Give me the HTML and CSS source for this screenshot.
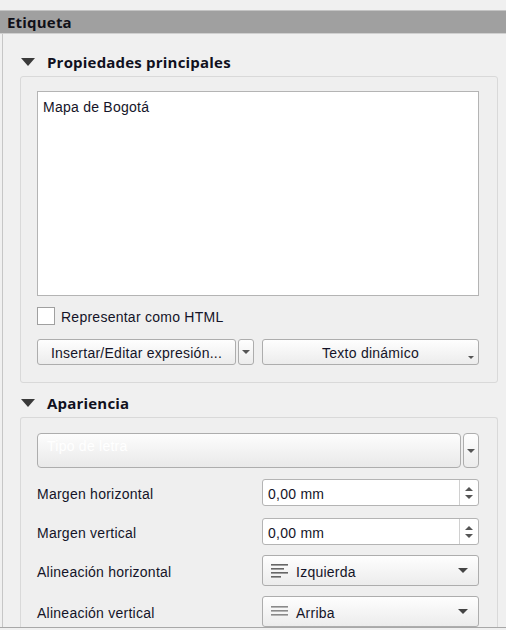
FILE: index.html
```html
<!DOCTYPE html>
<html>
<head>
<meta charset="utf-8">
<link rel="stylesheet" href="styles.css">
</head>
<body>
<div class="window">
  <div class="topgap"></div>
  <div class="header">Etiqueta</div>
  <div class="panel">
    <div class="section-title t1">
      <svg class="caret" width="14" height="8" viewBox="0 0 14 8"><path d="M0 0H14L7 8Z" fill="#3a3a3a"/></svg>
      <span>Propiedades principales</span>
    </div>
    <div class="group g1">
      <div class="textarea">Mapa de Bogotá</div>
      <div class="check"><span class="box"></span><span class="txt">Representar como HTML</span></div>
      <div class="btnrow">
        <div class="btn btn-expr"><span class="txt">Insertar/Editar expresión...</span></div>
        <div class="btn btn-menu"><svg width="8" height="4" viewBox="0 0 8 4"><path d="M0 0H8L4 4Z" fill="#555"/></svg></div>
        <div class="btn btn-dyn"><span class="txt">Texto dinámico</span><svg class="tiny" width="6" height="3" viewBox="0 0 6 3"><path d="M0 0H6L3 3Z" fill="#555"/></svg></div>
      </div>
    </div>
    <div class="section-title t2">
      <svg class="caret" width="14" height="8" viewBox="0 0 14 8"><path d="M0 0H14L7 8Z" fill="#3a3a3a"/></svg>
      <span>Apariencia</span>
    </div>
    <div class="group g2">
      <div class="fontrow">
        <div class="btn fontbtn">Tipo de letra</div>
        <div class="btn fontarrow"><svg width="8" height="4" viewBox="0 0 8 4"><path d="M0 0H8L4 4Z" fill="#555"/></svg></div>
      </div>
      <div class="formrow r-spin">
        <span class="label">Margen horizontal</span>
        <div class="spin">
          <span class="val">0,00 mm</span>
          <span class="arrows"><svg width="8" height="12" viewBox="0 0 8 12"><path d="M0 4H8L4 0Z M0 8H8L4 12Z" fill="#555"/></svg></span>
        </div>
      </div>
      <div class="formrow r-spin">
        <span class="label">Margen vertical</span>
        <div class="spin">
          <span class="val">0,00 mm</span>
          <span class="arrows"><svg width="8" height="12" viewBox="0 0 8 12"><path d="M0 4H8L4 0Z M0 8H8L4 12Z" fill="#555"/></svg></span>
        </div>
      </div>
      <div class="formrow r-combo">
        <span class="label">Alineación horizontal</span>
        <div class="btn combo">
          <svg class="lines" width="18" height="14" viewBox="0 0 18 14"><rect x="0" y="0" width="17" height="1.6" fill="#666"/><rect x="0" y="4" width="13" height="1.6" fill="#666"/><rect x="0" y="8" width="17" height="1.6" fill="#666"/><rect x="0" y="12" width="10" height="1.6" fill="#666"/></svg>
          <span class="cval">Izquierda</span>
          <svg class="carr" width="10" height="5" viewBox="0 0 10 5"><path d="M0 0H10L5 5Z" fill="#444"/></svg>
        </div>
      </div>
      <div class="formrow r-combo">
        <span class="label">Alineación vertical</span>
        <div class="btn combo">
          <svg class="lines" width="18" height="14" viewBox="0 0 18 14"><rect x="0" y="1" width="17" height="1.6" fill="#8a8a8a"/><rect x="0" y="5" width="17" height="1.6" fill="#8a8a8a"/><rect x="0" y="9" width="17" height="1.6" fill="#8a8a8a"/></svg>
          <span class="cval">Arriba</span>
          <svg class="carr" width="10" height="5" viewBox="0 0 10 5"><path d="M0 0H10L5 5Z" fill="#444"/></svg>
        </div>
      </div>
    </div>
  </div>
</div>
</body>
</html>
```
FILE: styles.css
```css
html, body {
  margin: 0;
  padding: 0;
  background: #f0f0f0;
}
body {
  font-family: "Liberation Sans", Arial, sans-serif;
  font-size: 14px;
  letter-spacing: 0.25px;
  color: #141428;
}
.window {
  height: 627px;
  overflow: hidden;
  border-bottom: 1px solid #a8a8a8;
  display: flex;
  flex-direction: column;
}
.topgap {
  height: 10px;
  flex: none;
}
.header {
  flex: none;
  height: 22px;
  line-height: 22px;
  background: #a0a0a0;
  border-top: 1px solid #c4c4c4;
  border-bottom: 1px solid #d0d0d0;
  padding-left: 7px;
  font-family: "Open Sans", sans-serif;
  font-weight: 700;
  font-size: 15px;
  letter-spacing: 0.2px;
  color: #101018;
}
.panel {
  flex: 1;
  margin-left: 2px;
  border-left: 1px solid #c6c6c6;
  display: flex;
  flex-direction: column;
}
.section-title {
  display: flex;
  align-items: center;
  height: 20px;
  padding-left: 18px;
  font-family: "Open Sans", sans-serif;
  font-weight: 700;
  font-size: 15px;
  letter-spacing: 0.2px;
  color: #101020;
}
.section-title .caret {
  margin-right: 12px;
  flex: none;
}
.t1 { padding-top: 18px; padding-bottom: 4px; }
.t2 { padding-top: 10px; padding-bottom: 4px; }
.group {
  margin-left: 17px;
  margin-right: 8px;
  border: 1px solid #d9d9d9;
  border-radius: 3px;
  background: #efefef;
  padding: 14px 18px 17px 16px;
  display: flex;
  flex-direction: column;
}
.g2 {
  padding-top: 15px;
  flex: 1;
  border-bottom: none;
  border-radius: 3px 3px 0 0;
}
.textarea {
  background: #fff;
  border: 1px solid #b4b4b4;
  padding: 7px 5px 5px;
  box-sizing: border-box;
  height: 205px;
}
.txt, .label, .val, .cval {
  padding-top: 2px;
}
.check {
  display: flex;
  align-items: center;
  margin-top: 11px;
  height: 18px;
}
.check .box {
  width: 16px;
  height: 16px;
  background: #fff;
  border: 1px solid #a0a0a0;
  margin-right: 6px;
}
.btnrow {
  display: flex;
  margin-top: 14px;
  height: 26px;
}
.btn {
  box-sizing: border-box;
  border: 1px solid #adadad;
  border-radius: 3px;
  background: linear-gradient(#fefefe, #ececec);
  display: flex;
  align-items: center;
  justify-content: center;
}
.btn-expr { width: 199px; }
.btn-menu { width: 16px; margin-left: 2px; }
.btn-dyn { flex: 1; margin-left: 8px; position: relative; }
.btn-dyn .tiny { position: absolute; right: 4px; bottom: 5px; }
.fontrow {
  display: flex;
  height: 35px;
}
.fontbtn {
  flex: 1;
  justify-content: flex-start;
  padding-left: 9px;
  padding-bottom: 10px;
  border-radius: 4px;
  color: #ffffff;
  background: linear-gradient(#fdfdfd, #e9e9e9);
}
.fontarrow {
  width: 16px;
  margin-left: 2px;
  border-radius: 4px;
}
.formrow {
  display: flex;
  align-items: center;
  justify-content: space-between;
}
.r-spin { height: 27px; }
.formrow:nth-child(2) { margin-top: 11px; }
.formrow:nth-child(3) { margin-top: 12px; }
.formrow:nth-child(4) { margin-top: 10px; }
.formrow:nth-child(5) { margin-top: 10px; }
.r-combo { height: 31px; }
.spin {
  width: 217px;
  height: 27px;
  box-sizing: border-box;
  background: #fff;
  border: 1px solid #b4b4b4;
  border-radius: 3px;
  display: flex;
  align-items: center;
}
.spin .val {
  flex: 1;
  padding-left: 5px;
}
.spin .arrows {
  width: 18px;
  height: 100%;
  border-left: 1px solid #d0d0d0;
  display: flex;
  align-items: center;
  justify-content: center;
}
.combo {
  width: 217px;
  height: 31px;
  justify-content: flex-start;
  padding-left: 8px;
}
.combo .lines { flex: none; margin-right: 7px; }
.combo .cval { flex: 1; }
.combo .carr { margin-right: 10px; }
```
